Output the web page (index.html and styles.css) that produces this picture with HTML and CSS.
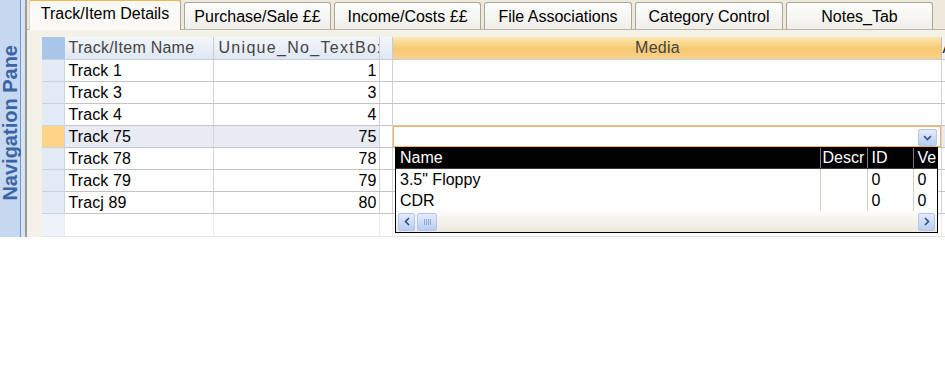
FILE: index.html
```html
<!DOCTYPE html>
<html lang="en">

<head>
    <meta charset="UTF-8">
    <meta name="viewport" content="width=device-width, initial-scale=1.0">
    <title>Track/Item Details</title>
    <link rel="stylesheet" href="styles.css">
</head>

<body>
    <div class="app">
        <div class="nav"><span>Navigation Pane</span></div>
        <div class="nav-edge"></div>
        <div class="main">
            <div class="tabs">
                <div class="tab on">Track/Item Details</div>
                <div class="tab w147">Purchase/Sale ££</div>
                <div class="tab w147">Income/Costs ££</div>
                <div class="tab">File Associations</div>
                <div class="tab">Category Control</div>
                <div class="tab w147">Notes_Tab</div>
            </div>
            <div class="panel">
                <div class="sheet">
                    <table class="grid">
                        <colgroup>
                            <col class="c-sel">
                            <col class="c-name">
                            <col class="c-uniq">
                            <col class="c-blank">
                            <col class="c-media">
                            <col class="c-more">
                        </colgroup>
                        <tr class="head">
                            <th class="sel"></th>
                            <th>Track/Item Name</th>
                            <th class="wide">Unique_No_TextBox</th>
                            <th></th>
                            <th class="media">Media</th>
                            <th class="more">Artist</th>
                        </tr>
                        <tr>
                            <td class="sel"></td>
                            <td>Track 1</td>
                            <td class="num">1</td>
                            <td></td>
                            <td></td>
                            <td></td>
                        </tr>
                        <tr>
                            <td class="sel"></td>
                            <td>Track 3</td>
                            <td class="num">3</td>
                            <td></td>
                            <td></td>
                            <td></td>
                        </tr>
                        <tr>
                            <td class="sel"></td>
                            <td>Track 4</td>
                            <td class="num">4</td>
                            <td></td>
                            <td></td>
                            <td></td>
                        </tr>
                        <tr class="current">
                            <td class="sel"></td>
                            <td>Track 75</td>
                            <td class="num">75</td>
                            <td class="plain"></td>
                            <td class="combo">
                                <span class="drop-btn">
                                    <svg width="9" height="6" viewBox="0 0 9 6"><polyline points="1,1 4.5,4.5 8,1" fill="none" stroke="#2b4f8f" stroke-width="1.6"/></svg>
                                </span>
                            </td>
                            <td></td>
                        </tr>
                        <tr>
                            <td class="sel"></td>
                            <td>Track 78</td>
                            <td class="num">78</td>
                            <td></td>
                            <td></td>
                            <td></td>
                        </tr>
                        <tr>
                            <td class="sel"></td>
                            <td>Track 79</td>
                            <td class="num">79</td>
                            <td></td>
                            <td></td>
                            <td></td>
                        </tr>
                        <tr>
                            <td class="sel"></td>
                            <td>Tracj 89</td>
                            <td class="num">80</td>
                            <td></td>
                            <td></td>
                            <td></td>
                        </tr>
                        <tr class="new">
                            <td class="sel"></td>
                            <td></td>
                            <td></td>
                            <td></td>
                            <td></td>
                            <td></td>
                        </tr>
                    </table>

                    <!-- list of the Media combo, dropped down -->
                    <div class="dropdown">
                        <table class="list">
                            <colgroup>
                                <col class="l-name">
                                <col class="l-desc">
                                <col class="l-id">
                                <col class="l-ver">
                            </colgroup>
                            <tr class="list-head">
                                <th>Name</th>
                                <th class="desc">Descr</th>
                                <th>ID</th>
                                <th>Ve</th>
                            </tr>
                            <tr>
                                <td>3.5" Floppy</td>
                                <td></td>
                                <td>0</td>
                                <td>0</td>
                            </tr>
                            <tr>
                                <td>CDR</td>
                                <td></td>
                                <td>0</td>
                                <td>0</td>
                            </tr>
                        </table>
                        <div class="hscroll">
                            <span class="sbtn">
                                <svg width="6" height="9" viewBox="0 0 6 9"><polyline points="5,1 1.5,4.5 5,8" fill="none" stroke="#2b4f8f" stroke-width="1.6"/></svg>
                            </span>
                            <span class="thumb">
                                <svg width="7" height="6" viewBox="0 0 7 6"><path d="M0.5 0v6M2.5 0v6M4.5 0v6M6.5 0v6" stroke="#8fa8d6" stroke-width="1"/></svg>
                            </span>
                            <span class="track"></span>
                            <span class="sbtn">
                                <svg width="6" height="9" viewBox="0 0 6 9"><polyline points="1,1 4.5,4.5 1,8" fill="none" stroke="#2b4f8f" stroke-width="1.6"/></svg>
                            </span>
                        </div>
                    </div>
                </div>
            </div>
        </div>
    </div>
</body>

</html>
```

FILE: styles.css
```css
body {
    margin: 0;
    background: #fff;
    font-family: "Liberation Sans", Arial, sans-serif;
    font-size: 16px;
    color: #000;
}

.app {
    display: flex;
    width: 945px;
    height: 237px;
    overflow: hidden;
}

/* collapsed navigation pane */
.nav {
    width: 21px;
    flex: none;
    background: #c6d9f1;
    border-right: 1px solid #7598cb;
    display: flex;
    align-items: center;
    justify-content: center;
    padding-top: 9px;
    box-sizing: border-box;
}

.nav span {
    writing-mode: vertical-rl;
    transform: rotate(180deg);
    font-weight: bold;
    font-size: 20px;
    line-height: 20px;
    color: #3a65a5;
    white-space: nowrap;
}

.nav-edge {
    width: 4px;
    flex: none;
    background: #d6e3f4;
    border-right: 2px solid #9b9a93;
}

.main {
    flex: 1;
    min-width: 0;
    display: flex;
    flex-direction: column;
    background: #eeeadb;
}

/* tab strip */
.tabs {
    height: 30px;
    flex: none;
    display: flex;
    align-items: flex-end;
    gap: 3px;
    padding-left: 2px;
    border-bottom: 1px solid #b9b6a8;
    box-sizing: border-box;
}

.tab {
    width: 148px;
    height: 27px;
    box-sizing: border-box;
    border: 1px solid #a9a79d;
    border-bottom: none;
    border-radius: 3px 3px 0 0;
    background: linear-gradient(#fefefd, #efeee9);
    display: flex;
    align-items: center;
    justify-content: center;
    white-space: nowrap;
    padding-top: 1px;
}

.tab.w147 {
    width: 147px;
}

.tab.on {
    width: 152px;
    height: 31px;
    margin-bottom: -1px;
    border-top: 2px solid #f0b54c;
    border-color: #f0b54c #a9a79d transparent #d8d5c8;
    background: #fbfaf7;
    padding-top: 0;
    padding-bottom: 3px;
}

.panel {
    flex: 1;
    min-height: 0;
    background: #f3f1e8;
    padding: 7px 0 0 15px;
    overflow: hidden;
}

.sheet {
    position: relative;
    background: #fff;
    height: 200px;
}

/* datasheet */
.grid {
    table-layout: fixed;
    border-collapse: collapse;
    width: 960px;
}

.c-sel { width: 22px; }
.c-name { width: 149px; }
.c-uniq { width: 166px; }
.c-blank { width: 13px; }
.c-media { width: 549px; }
.c-more { width: 61px; }

.grid th,
.grid td {
    height: 21px;
    padding: 0 4px;
    border-right: 1px solid #d3d3d3;
    border-bottom: 1px solid #c4c4c4;
    white-space: nowrap;
    overflow: hidden;
    text-align: left;
    font-weight: normal;
    line-height: 21px;
}

.grid th {
    height: 22px;
    line-height: 22px;
    color: #444;
    letter-spacing: 0.25px;
    background: linear-gradient(#f3f6fb, #dfe7f2);
    border-right: 1px solid #c3ccd9;
    border-bottom: 1px solid #c6cfdc;
}

.grid th.wide {
    padding-left: 5px;
    letter-spacing: 1.3px;
}

.grid td {
    letter-spacing: 0.1px;
}

.grid th.sel {
    background: #a9c6e9;
    border-right-color: #a9c6e9;
}

.grid td.sel {
    background: #e3ebf6;
    border-right: 1px solid #c9d4e3;
    border-bottom: 1px solid #c9d4e3;
}

.grid th.media {
    text-align: center;
    padding-right: 22px;
    background: linear-gradient(#fde7b3, #f7c86f 55%, #f8d38a);
    border-right-color: #bfbfbf;
}

.grid th.more {
    background: #f4f4f4;
    color: #222;
    padding-left: 1px;
}

.grid td.num {
    text-align: right;
    padding-right: 2px;
}

.grid .current td {
    background: #e8eaf4;
}

.grid .current td.sel {
    background: #ffd489;
}

.grid .current td.plain {
    background: #fff;
}

.grid td.combo {
    position: relative;
    background: #fff;
    box-shadow: inset 0 0 0 1px #f4b45a;
    overflow: visible;
}

.grid .new td {
    height: 22px;
    border-bottom-color: #e4e4e4;
    border-right-color: #ececec;
}

.grid .new td.sel {
    background: #eef3fa;
}

.drop-btn {
    position: absolute;
    right: 4px;
    top: 3px;
    width: 19px;
    height: 17px;
    box-sizing: border-box;
    border: 1px solid #b3c5ea;
    border-radius: 2px;
    background: linear-gradient(#e4ecfc, #b9cdf0);
    display: flex;
    align-items: center;
    justify-content: center;
}

/* dropped list */
.dropdown {
    position: absolute;
    left: 353px;
    top: 110px;
    width: 543px;
    height: 86px;
    box-sizing: border-box;
    border: 1px solid #000;
    background: #fff;
    overflow: hidden;
}

.list {
    table-layout: fixed;
    border-collapse: collapse;
    width: 560px;
}

.l-name { width: 424px; }
.l-desc { width: 47px; }
.l-id { width: 46px; }
.l-ver { width: 43px; }

.list th,
.list td {
    padding: 0 0 0 4px;
    text-align: left;
    font-weight: normal;
    white-space: nowrap;
    overflow: hidden;
    border-right: 1px solid #d2cfc6;
}

.list th {
    height: 20px;
    line-height: 20px;
    background: #000;
    color: #fff;
    border-right-color: #7d7d7d;
    border-bottom: 1px solid #3a3a3a;
}

.list th.desc {
    padding-left: 2px;
}

.list td {
    height: 21px;
    line-height: 21px;
}

.hscroll {
    display: flex;
    align-items: center;
    gap: 2px;
    height: 21px;
    padding: 0 2px;
    background: linear-gradient(#fcfcfa, #ebe8dd);
}

.sbtn,
.thumb {
    width: 17px;
    height: 18px;
    box-sizing: border-box;
    border: 1px solid #b3c5ea;
    border-radius: 2px;
    background: linear-gradient(#e4ecfc, #b9cdf0);
    display: flex;
    align-items: center;
    justify-content: center;
    flex: none;
}

.thumb {
    width: 20px;
}

.track {
    flex: 1;
}
```
